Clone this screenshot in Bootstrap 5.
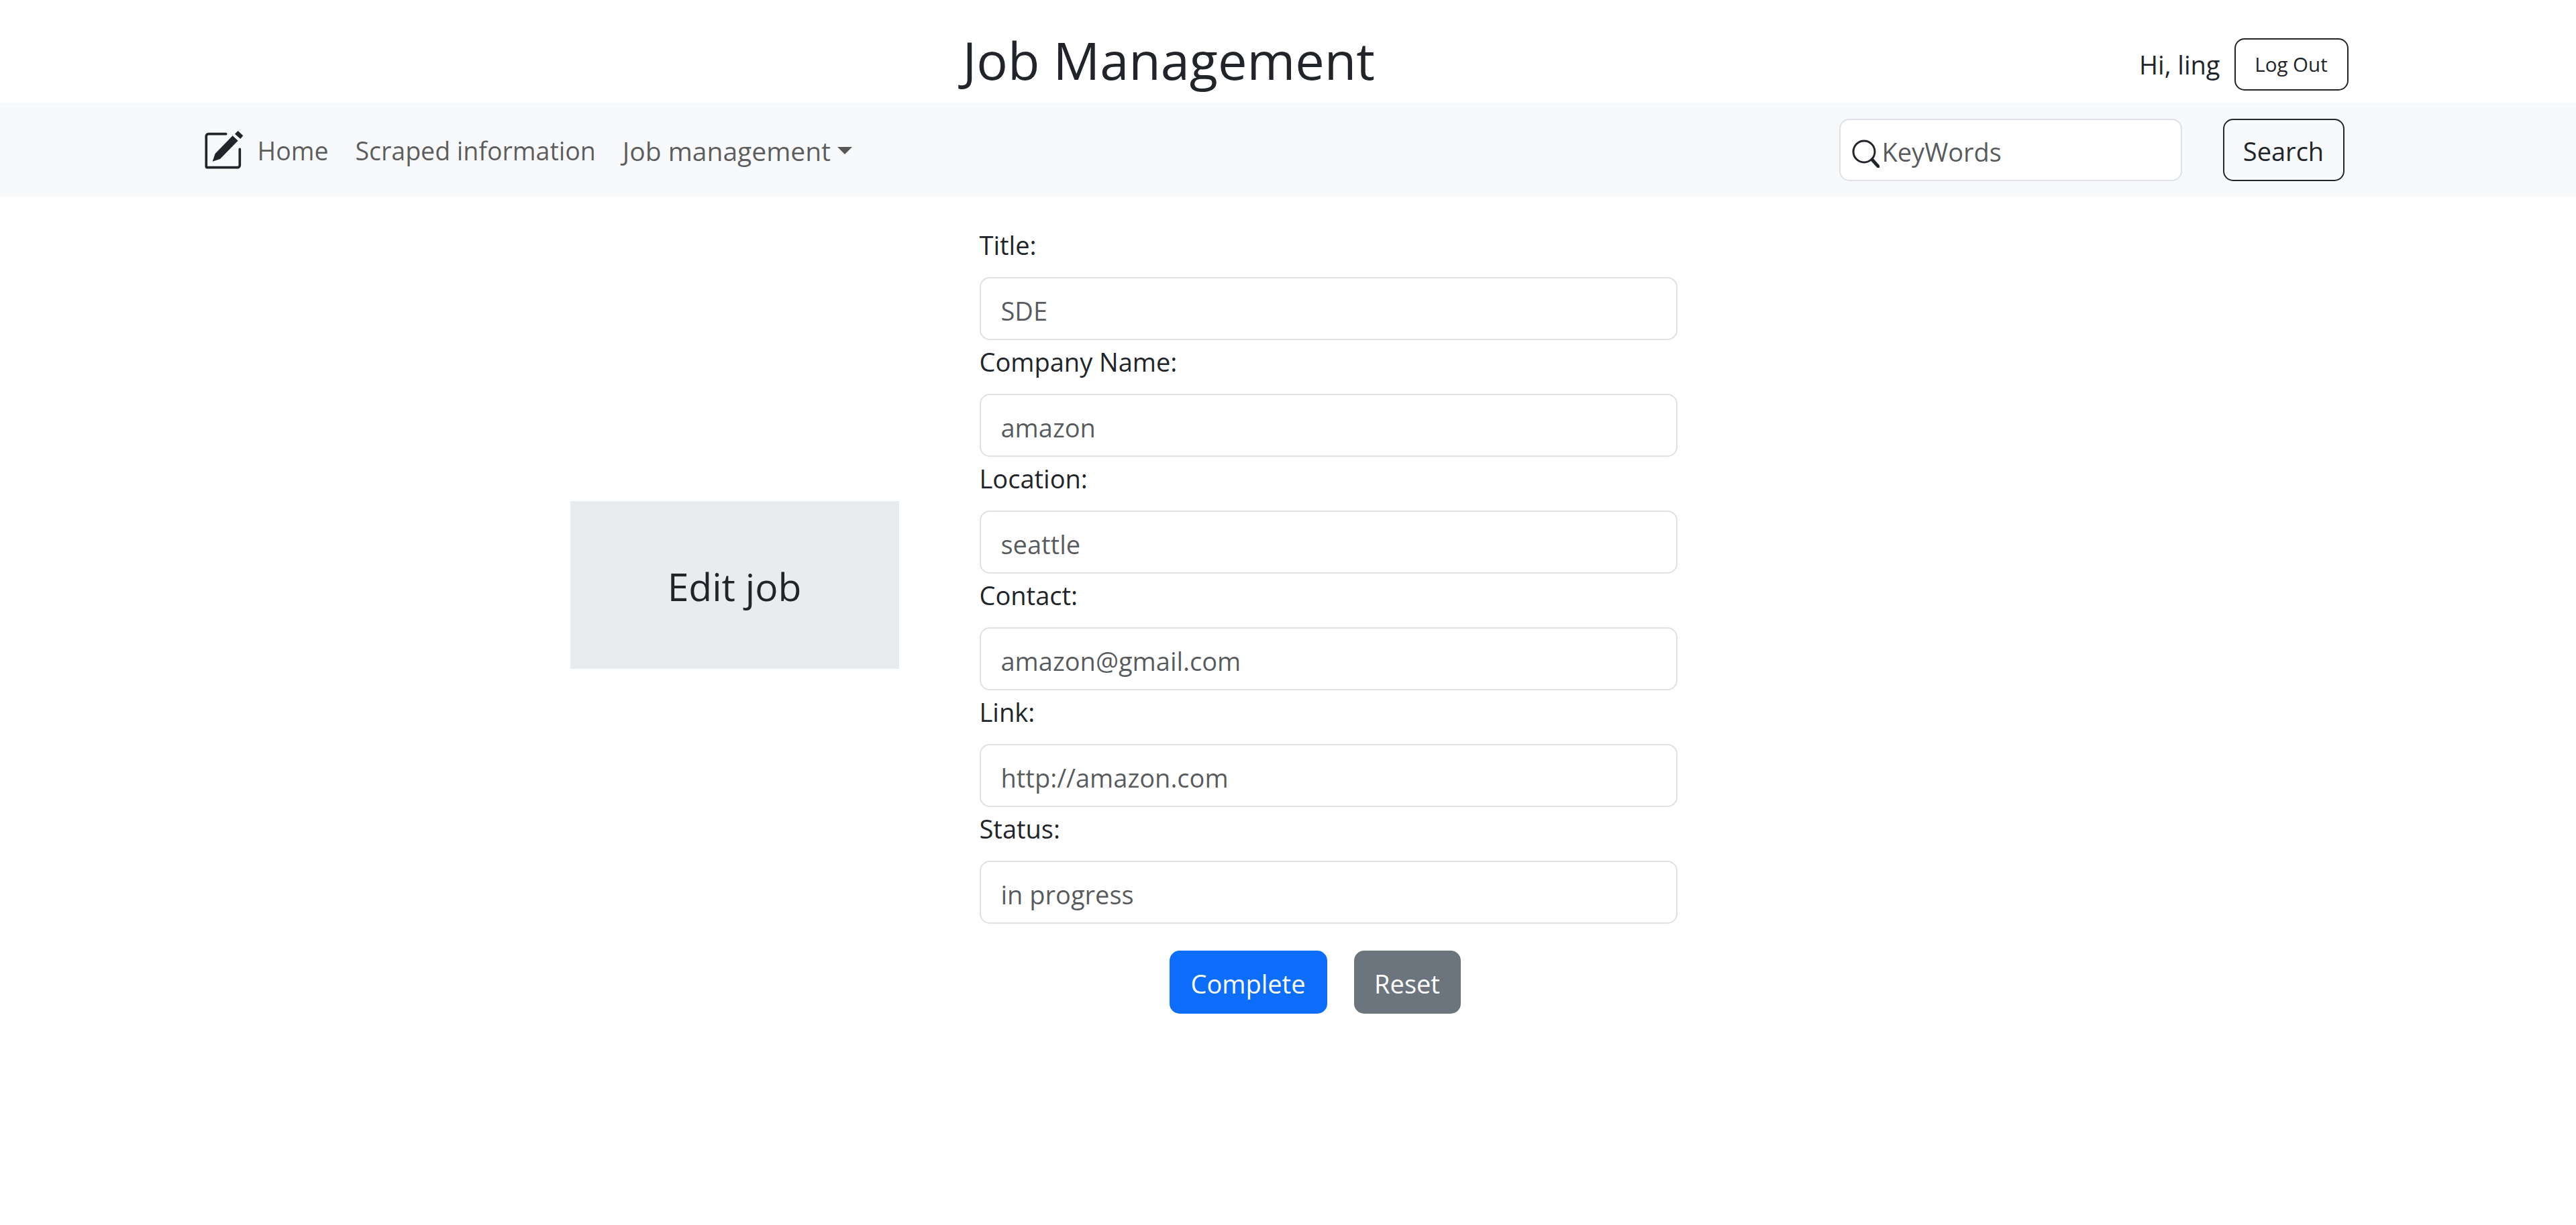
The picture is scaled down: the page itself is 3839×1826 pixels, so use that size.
<!DOCTYPE html>
<html lang="en">
<head>
    <meta charset="UTF-8">
    <meta name="viewport" content="width=device-width, initial-scale=1.0">
    <title>Job Management</title>
    <link href="https://cdn.jsdelivr.net/npm/bootstrap@5.3.0/dist/css/bootstrap.min.css" rel="stylesheet">
    <style>
        /* the page was captured at 250% zoom, so 1rem = 40px */
        html { font-size: 40px; }
        :root {
            --bs-body-font-family: "Open Sans", sans-serif;
            --bs-body-font-size: 38px;
            --bs-body-line-height: 60px;
            --bs-border-width: 2px;
        }
        .container { max-width: 3300px !important; }
        .top-head { height: 153px; padding-top: 38px; }
        .page-title { font-size: 77.5px; line-height: 90px; margin: 0 0 14px 1135px; }
        .user-box { margin-right: 40px; gap: 21px; }
        .logout-btn { --bs-btn-font-size: 29.5px; --bs-btn-padding-x: 0; width: 170px; height: 78px; line-height: 54px; padding-top: 10px; padding-bottom: 10px; }
        .navbar-brand { margin-right: 0; padding: 0; margin-left: 4px; display: flex; }
        .nav-link { font-size: 37.5px; line-height: 60px; padding-top: 22px !important; padding-bottom: 18px !important; }
        .job-menu { font-size: 39px; }
        .search-box { width: 511px; height: 93px; padding-left: 62px; padding-top: 18px; padding-bottom: 13px; }
        .search-wrap { margin-right: 46px; gap: 61px; }
        .search-ico { position: absolute; left: 18px; top: 31px; }
        .search-btn { --bs-btn-font-size: 38px; --bs-btn-padding-x: 0; --bs-btn-padding-y: 0; width: 181px; height: 93px; padding-top: 5px; }
        .form-control { font-size: 38px; line-height: 60px; }
        .edit-area { padding-left: 550px; padding-top: 40px; gap: 120px; }
        .side-box { width: 490px; height: 250px; margin-top: 414px; padding-top: 4px; background: #e9ecef; font-size: 57px; }
        .job-form { width: 1040px; }
        .job-form .form-label { padding-top: 2px; margin-bottom: 18px; }
        .job-form .form-control { height: 94px; padding-top: 18px; padding-bottom: 13px; }
        .form-btns { margin-left: 283px; gap: 40px; }
        .form-btns .btn { --bs-btn-font-size: 38px; --bs-btn-padding-x: 0; --bs-btn-padding-y: 0; height: 94px; padding-top: 5px; }
        .done-btn { width: 235px; }
        .reset-btn { width: 159px; }
    </style>
</head>
<body>
    <div class="container">
        <div class="d-flex align-items-center top-head">
            <h2 class="page-title">Job Management</h2>
            <div class="d-flex align-items-center ms-auto user-box">
                <span>Hi, ling</span>
                <button class="btn btn-outline-dark logout-btn" type="button">Log Out</button>
            </div>
        </div>
    </div>

    <nav class="navbar navbar-expand-lg navbar-light bg-light">
        <div class="container">
            <a class="navbar-brand" href="#">
                <svg width="60" height="60" viewBox="70 60 180 180">
                    <path d="M168 80H90a10 10 0 0 0-10 10v135a5 5 0 0 0 5 5h135a10 10 0 0 0 10-10v-72" fill="none" stroke="#212529" stroke-width="11" stroke-linecap="round"/>
                    <path d="M108 203l12-35 78-80 24 22-80 82z" fill="#212529"/>
                    <path d="M222 66l23 22-12 14-25-22z" fill="#212529"/>
                </svg>
            </a>
            <ul class="navbar-nav me-auto">
                <li class="nav-item"><a class="nav-link" href="#">Home</a></li>
                <li class="nav-item"><a class="nav-link" href="#">Scraped information</a></li>
                <li class="nav-item dropdown"><a class="nav-link dropdown-toggle job-menu" href="#" role="button" data-bs-toggle="dropdown">Job management</a></li>
            </ul>
            <form class="d-flex search-wrap">
                <div class="position-relative">
                    <input class="form-control search-box" type="text" placeholder="KeyWords">
                    <svg class="search-ico" width="42" height="42" viewBox="0 0 42 42">
                        <circle cx="19" cy="18" r="16" fill="none" stroke="#212529" stroke-width="3"/>
                        <path d="M31 30l10 11" stroke="#212529" stroke-width="5" stroke-linecap="round"/>
                    </svg>
                </div>
                <button class="btn btn-outline-dark search-btn" type="button">Search</button>
            </form>
        </div>
    </nav>

    <div class="container">
        <div class="d-flex align-items-start edit-area">
            <div class="d-flex align-items-center justify-content-center side-box">Edit job</div>
            <form class="job-form">
                <div><label class="form-label">Title:</label><input class="form-control" type="text" placeholder="SDE"></div>
                <div><label class="form-label">Company Name:</label><input class="form-control" type="text" placeholder="amazon"></div>
                <div><label class="form-label">Location:</label><input class="form-control" type="text" placeholder="seattle"></div>
                <div><label class="form-label">Contact:</label><input class="form-control" type="text" placeholder="amazon@gmail.com"></div>
                <div><label class="form-label">Link:</label><input class="form-control" type="text" placeholder="http://amazon.com"></div>
                <div><label class="form-label">Status:</label><input class="form-control" type="text" placeholder="in progress"></div>
                <div class="d-flex mt-3 form-btns">
                    <button class="btn btn-primary done-btn" type="button">Complete</button>
                    <button class="btn btn-secondary reset-btn" type="button">Reset</button>
                </div>
            </form>
        </div>
    </div>

    <script src="https://cdn.jsdelivr.net/npm/bootstrap@5.3.0/dist/js/bootstrap.bundle.min.js"></script>
</body>
</html>
